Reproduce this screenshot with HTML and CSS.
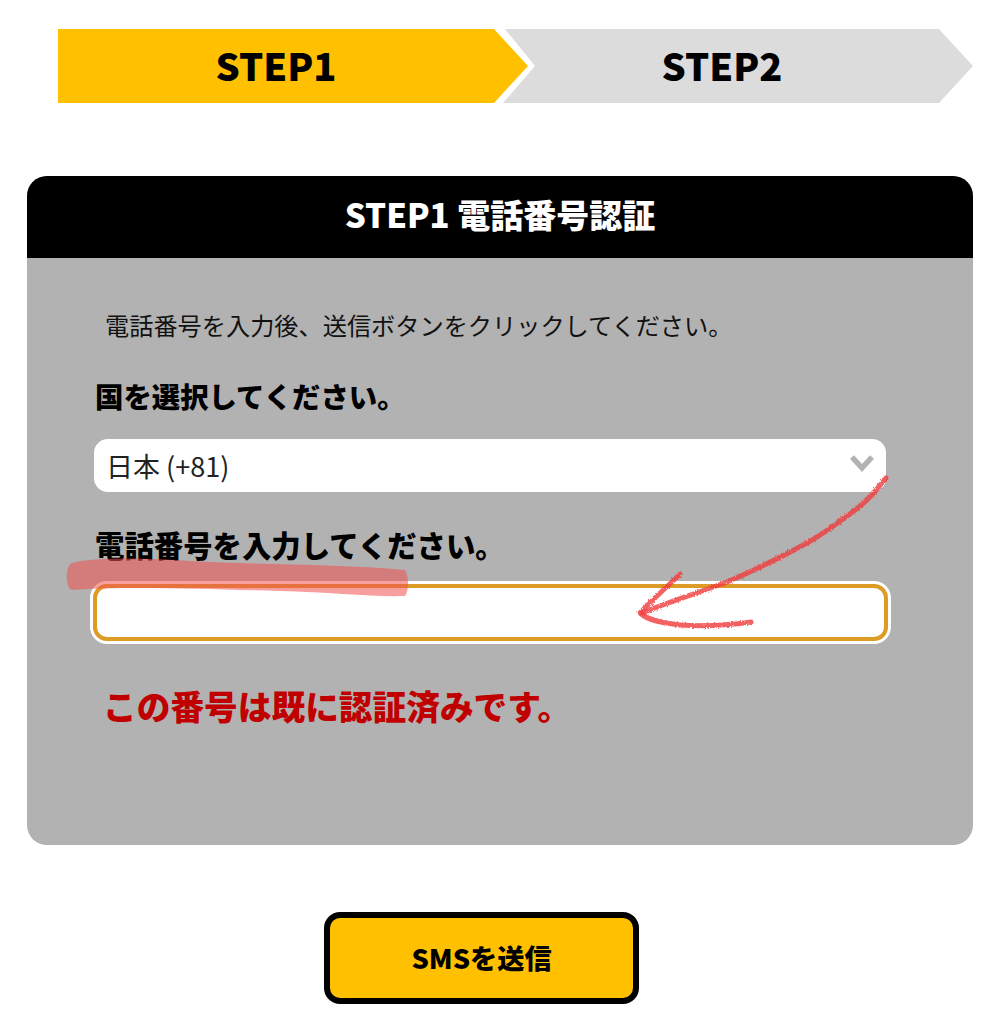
FILE: index.html
```html
<!DOCTYPE html>
<html lang="ja">
<head>
    <meta charset="UTF-8">
    <meta name="viewport" content="width=device-width, initial-scale=1.0">
    <title>STEP1 電話番号認証</title>
    <link rel="stylesheet" href="styles.css">
</head>
<body>
    <div class="page">
        <!-- ステップ表示 -->
        <div class="steps">
            <div class="step step-active">STEP1</div>
            <div class="step step-next">STEP2</div>
        </div>

        <!-- 認証カード -->
        <div class="card">
            <h1 class="card-title">STEP1 電話番号認証</h1>
            <div class="card-body">
                <p class="lead">電話番号を入力後、送信ボタンをクリックしてください。</p>
                <p class="label">国を選択してください。</p>
                <div class="select">
                    <span>日本 (+81)</span>
                    <svg class="chevron" width="26" height="18" viewBox="0 0 26 18">
                        <path d="M3 2 L13 13 L23 2" fill="none" stroke="#b2b2b2" stroke-width="5.5"/>
                    </svg>
                </div>
                <p class="label label-phone">電話番号を入力してください。</p>
                <div class="phone-input"></div>
                <p class="error">この番号は既に認証済みです。</p>
            </div>
        </div>

        <!-- 送信ボタン -->
        <div class="actions">
            <a class="btn" href="#">SMSを送信</a>
        </div>

        <!-- 手書きの赤線と矢印 -->
        <svg class="markup" width="998" height="1024" viewBox="0 0 998 1024">
            <defs>
                <filter id="rough" x="-5%" y="-5%" width="110%" height="110%">
                    <feTurbulence type="fractalNoise" baseFrequency="0.7" numOctaves="2" seed="4"/>
                    <feDisplacementMap in="SourceGraphic" scale="3"/>
                </filter>
            </defs>
            <path class="marker" d="M72 563 C95 557 150 558 190 561 C260 565 340 564 405 570 C409 576 409 591 405 596 C370 597 330 592 280 591 C200 589 130 586 72 590 C65 588 65 566 72 563 Z"/>
            <g class="pen" filter="url(#rough)">
                <path d="M886 478 C872 496 862 506 847 516 C832 527 820 536 807 543 C780 558 750 572 727 582 C695 594 665 603 642 613"/>
                <path d="M680 574 C668 586 652 600 640 613 C648 620 660 623 680 625 C705 627 730 625 751 622"/>
            </g>
        </svg>
    </div>
</body>
</html>
```

FILE: styles.css
```css
/* 全体 */
* {
    margin: 0;
    padding: 0;
    box-sizing: border-box;
    font-family: 'Noto Sans CJK JP', 'Noto Sans', sans-serif;
}

body {
    background-color: #fff;
    color: #000;
}

.page {
    position: relative;
    width: 998px;
    height: 1024px;
    overflow: hidden;
}

/* ステップ */
.steps {
    display: flex;
    padding: 29px 0 0 58px;
}

.step {
    display: flex;
    align-items: center;
    justify-content: center;
    width: 470px;
    height: 74px;
    padding: 0 34px 4px 0;
    font-size: 38px;
    font-weight: 900;
}

.step-active {
    background-color: #ffc000;
    clip-path: polygon(0 0, 436px 0, 470px 37px, 436px 74px, 0 74px);
}

.step-next {
    margin-left: -25px;
    padding-left: 2px;
    background-color: #dcdcdc;
    clip-path: polygon(2px 0, 436px 0, 470px 37px, 436px 74px, 0 74px, 32px 37px);
}

/* カード */
.card {
    margin: 73px 25px 0 27px;
    height: 669px;
    border-radius: 20px;
    overflow: hidden;
    background-color: #b2b2b2;
}

.card-title {
    height: 82px;
    line-height: 76px;
    background-color: #000;
    color: #fff;
    font-size: 33px;
    font-weight: 900;
    text-align: center;
}

.card-body {
    padding: 48px 87px 0 67px;
}

.lead {
    padding-left: 11px;
    font-size: 24.2px;
    line-height: 38px;
    color: #111;
}

.label {
    margin-top: 30px;
    padding-left: 1px;
    font-size: 28.4px;
    font-weight: 900;
    line-height: 44px;
}

.select {
    display: flex;
    align-items: center;
    justify-content: space-between;
    margin-top: 21px;
    height: 53px;
    padding: 0 11px 0 12px;
    border-radius: 14px;
    background-color: #fff;
    font-size: 27px;
    color: #222;
}

.chevron {
    margin-top: -4px;
}

.label-phone {
    margin-top: 30px;
    font-size: 29.4px;
}

.phone-input {
    width: 795px;
    height: 57px;
    margin: 18px 0 0 -1px;
    border: 4px solid #dd9c26;
    border-radius: 14px;
    background-color: #fff;
    box-shadow: 0 0 0 3px #fff;
}

.error {
    margin-top: 41px;
    padding-left: 9px;
    font-size: 33.7px;
    font-weight: 900;
    line-height: 48px;
    color: #c00000;
}

/* ボタン */
.actions {
    display: flex;
    justify-content: center;
    padding: 67px 35px 0 0;
}

.btn {
    display: flex;
    align-items: center;
    justify-content: center;
    width: 315px;
    height: 92px;
    padding-bottom: 3px;
    border: 6px solid #000;
    border-radius: 16px;
    background-color: #ffc000;
    color: #000;
    font-size: 27.2px;
    font-weight: 900;
    text-decoration: none;
}

/* 手書き */
.markup {
    position: absolute;
    top: 0;
    left: 0;
    pointer-events: none;
}

.marker {
    fill: rgba(240, 80, 80, 0.55);
}

.pen path {
    fill: none;
    stroke: rgba(240, 60, 60, 0.8);
    stroke-width: 5;
    stroke-linecap: round;
    stroke-linejoin: round;
}
```
